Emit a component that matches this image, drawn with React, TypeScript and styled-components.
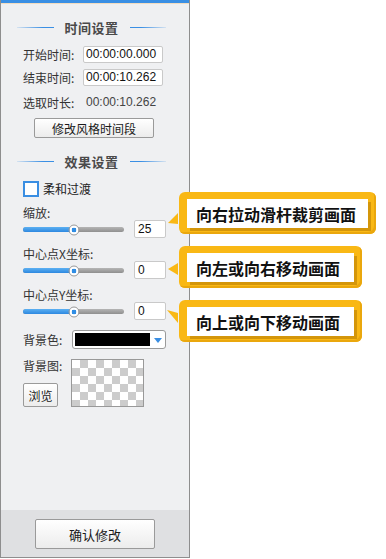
import styled, { createGlobalStyle } from "styled-components";

const GlobalStyle = createGlobalStyle`
  html, body {
    margin: 0;
    padding: 0;
    background: #ffffff;
  }
  * {
    box-sizing: border-box;
  }
`;

const FONT = `"Noto Sans CJK SC", "Liberation Sans", sans-serif`;
const NUM_FONT = `"Liberation Sans", "Noto Sans CJK SC", sans-serif`;

type CalloutData = {
  text: string;
  top: number;
  width: number;
  pointer: string;
};

const callouts: CalloutData[] = [
  { text: "向右拉动滑杆裁剪画面", top: 192, width: 197, pointer: "12,21 12,32 2,31" },
  { text: "向左或向右移动画面", top: 246, width: 183, pointer: "12,17 12,29 2,23" },
  { text: "向上或向下移动画面", top: 300, width: 183, pointer: "1,10 12,13 12,23" },
];

function Slider({ value }: { value: number }) {
  return (
    <StyledTrack>
      <StyledTrackFill $value={value} />
      <StyledThumb $value={value} />
    </StyledTrack>
  );
}

function App() {
  return (
    <StyledPage>
      <GlobalStyle />
      <StyledPanel>
        <StyledTopBar />
        <StyledContent>
          <StyledHeading>
            <StyledLine $side="left" />
            <StyledHeadingText>时间设置</StyledHeadingText>
            <StyledLine $side="right" />
          </StyledHeading>

          <StyledRow $mt={10}>
            <StyledLabel $width={60}>开始时间:</StyledLabel>
            <StyledTimeInput>00:00:00.000</StyledTimeInput>
          </StyledRow>
          <StyledRow $mt={6}>
            <StyledLabel $width={60}>结束时间:</StyledLabel>
            <StyledTimeInput>00:00:10.262</StyledTimeInput>
          </StyledRow>
          <StyledRow $mt={8}>
            <StyledLabel $width={63}>选取时长:</StyledLabel>
            <StyledValue>00:00:10.262</StyledValue>
          </StyledRow>

          <StyledWideButton>修改风格时间段</StyledWideButton>

          <StyledHeading $mt={16}>
            <StyledLine $side="left" />
            <StyledHeadingText>效果设置</StyledHeadingText>
            <StyledLine $side="right" />
          </StyledHeading>

          <StyledRow $mt={10}>
            <StyledCheckbox />
            <StyledCheckLabel>柔和过渡</StyledCheckLabel>
          </StyledRow>

          <StyledFieldLabel>缩放:</StyledFieldLabel>
          <StyledSliderRow>
            <Slider value={50} />
            <StyledSmallInput>25</StyledSmallInput>
          </StyledSliderRow>

          <StyledFieldLabel>中心点X坐标:</StyledFieldLabel>
          <StyledSliderRow>
            <Slider value={50} />
            <StyledSmallInput>0</StyledSmallInput>
          </StyledSliderRow>

          <StyledFieldLabel>中心点Y坐标:</StyledFieldLabel>
          <StyledSliderRow>
            <Slider value={50} />
            <StyledSmallInput>0</StyledSmallInput>
          </StyledSliderRow>

          <StyledRow $mt={10}>
            <StyledLabel $width={49}>背景色:</StyledLabel>
            <StyledColorSelect>
              <StyledColorSwatch />
              <StyledArrow />
            </StyledColorSelect>
          </StyledRow>

          <StyledImageRow>
            <StyledImageSide>
              <StyledImageLabel>背景图:</StyledImageLabel>
              <StyledSmallButton>浏览</StyledSmallButton>
            </StyledImageSide>
            <StyledChecker />
          </StyledImageRow>
        </StyledContent>
        <StyledFooter>
          <StyledConfirmButton>确认修改</StyledConfirmButton>
        </StyledFooter>
      </StyledPanel>

      {callouts.map((c) => (
        <StyledCallout key={c.text} $top={c.top} $width={c.width}>
          <StyledPointer width="14" height="42" viewBox="0 0 14 42">
            <polygon points={c.pointer} fill="#f9b815" />
          </StyledPointer>
          <StyledCalloutInner>{c.text}</StyledCalloutInner>
        </StyledCallout>
      ))}
    </StyledPage>
  );
}

export default App;

const StyledPage = styled.div`
  position: relative;
  width: 386px;
  height: 559px;
  background: #ffffff;
  font-family: ${FONT};
`;

const StyledPanel = styled.div`
  display: flex;
  flex-direction: column;
  width: 190px;
  height: 558px;
  background: #eff0f2;
  border-left: 1px solid #8e8e8e;
  border-right: 1px solid #8e8e8e;
  border-bottom: 1px solid #8e8e8e;
`;

const StyledTopBar = styled.div`
  height: 4px;
  background: #3a8fe4;
  border-bottom: 1px solid #f2dcc0;
`;

const StyledContent = styled.div`
  flex: 1;
  display: flex;
  flex-direction: column;
  padding: 16px 0 0 22px;
`;

const StyledHeading = styled.div<{ $mt?: number }>`
  display: flex;
  align-items: center;
  width: 149px;
  height: 16px;
  margin: ${({ $mt }) => $mt ?? 0}px 0 0 -6px;
  gap: 11px;
`;

const StyledLine = styled.div<{ $side: "left" | "right" }>`
  flex: 1;
  height: 1px;
  margin-top: -2px;
  background: linear-gradient(
    ${({ $side }) => ($side === "left" ? "to right" : "to left")},
    rgba(58, 143, 228, 0.15),
    #3a8fe4 70%
  );
`;

const StyledHeadingText = styled.span`
  font-size: 13px;
  font-weight: 700;
  color: #4a4a4a;
  line-height: 16px;
  letter-spacing: 0.5px;
`;

const StyledRow = styled.div<{ $mt?: number }>`
  display: flex;
  align-items: center;
  min-height: 17px;
  margin-top: ${({ $mt }) => $mt ?? 0}px;
`;

const StyledLabel = styled.span<{ $width: number }>`
  width: ${({ $width }) => $width}px;
  flex-shrink: 0;
  font-size: 12px;
  line-height: 14px;
  color: #333333;
`;

const StyledTimeInput = styled.div`
  width: 80px;
  height: 17px;
  padding-left: 2px;
  background: #ffffff;
  border: 1px solid #c9c9c9;
  border-radius: 2px;
  font-family: ${NUM_FONT};
  font-size: 12px;
  line-height: 15px;
  color: #111111;
`;

const StyledValue = styled.span`
  font-family: ${NUM_FONT};
  font-size: 12px;
  line-height: 15px;
  color: #444444;
`;

const StyledButtonBase = styled.div`
  display: flex;
  align-items: center;
  justify-content: center;
  background: linear-gradient(#ffffff, #ececec);
  border: 1px solid #9a9a9a;
  border-radius: 2px;
  font-size: 12px;
  color: #1a1a1a;
`;

const StyledWideButton = styled(StyledButtonBase)`
  width: 120px;
  height: 20px;
  margin: 7px 0 0 11px;
`;

const StyledCheckbox = styled.div`
  width: 16px;
  height: 16px;
  background: #ffffff;
  border: 2px solid #3a8ee2;
`;

const StyledCheckLabel = styled.span`
  margin-left: 4px;
  font-size: 12px;
  color: #222222;
`;

const StyledFieldLabel = styled.div`
  margin-top: 9px;
  font-size: 12px;
  line-height: 14px;
  color: #333333;
`;

const StyledSliderRow = styled.div`
  display: flex;
  align-items: center;
  gap: 10px;
  height: 18px;
`;

const StyledTrack = styled.div`
  position: relative;
  width: 101px;
  height: 5px;
  margin-top: 1px;
  border-radius: 3px;
  background: linear-gradient(#b5b5b5, #8f8f8f);
`;

const StyledTrackFill = styled.div<{ $value: number }>`
  width: ${({ $value }) => $value}%;
  height: 100%;
  border-radius: 3px 0 0 3px;
  background: linear-gradient(#5cb0f2, #2d88e0);
`;

const StyledThumb = styled.div<{ $value: number }>`
  position: absolute;
  top: 50%;
  left: ${({ $value }) => $value}%;
  width: 11px;
  height: 11px;
  transform: translate(-50%, -50%);
  border-radius: 50%;
  background: radial-gradient(circle, #2f8de4 0 2.2px, #ffffff 2.6px);
  border: 1px solid #9a9a9a;
`;

const StyledSmallInput = styled.div`
  width: 32px;
  height: 18px;
  padding-left: 3px;
  background: #ffffff;
  border: 1px solid #c9c9c9;
  border-radius: 2px;
  font-family: ${NUM_FONT};
  font-size: 12px;
  line-height: 16px;
  color: #111111;
`;

const StyledColorSelect = styled.div`
  display: flex;
  align-items: center;
  width: 94px;
  height: 19px;
  padding: 2px;
  background: #ffffff;
  border: 1px solid #9a9a9a;
  border-radius: 3px;
`;

const StyledColorSwatch = styled.div`
  width: 75px;
  height: 100%;
  background: #000000;
`;

const StyledArrow = styled.div`
  width: 0;
  height: 0;
  margin: 1px 0 0 4px;
  border-left: 4.5px solid transparent;
  border-right: 4.5px solid transparent;
  border-top: 5px solid #3a8ee2;
`;

const StyledImageRow = styled.div`
  display: flex;
  margin-top: 10px;
`;

const StyledImageSide = styled.div`
  display: flex;
  flex-direction: column;
  width: 48px;
`;

const StyledImageLabel = styled.span`
  font-size: 12px;
  line-height: 14px;
  color: #333333;
`;

const StyledSmallButton = styled(StyledButtonBase)`
  width: 35px;
  height: 24px;
  margin-top: 10px;
`;

const StyledChecker = styled.div`
  width: 73px;
  height: 48px;
  border: 1px solid #999999;
  background-color: #ffffff;
  background-image: repeating-conic-gradient(#cccccc 0 25%, #ffffff 0 50%);
  background-size: 16px 16px;
`;

const StyledFooter = styled.div`
  display: flex;
  align-items: center;
  justify-content: center;
  height: 47px;
  background: #dfe0e2;
`;

const StyledConfirmButton = styled(StyledButtonBase)`
  width: 120px;
  height: 30px;
  margin-top: 1px;
  font-size: 13px;
`;

const StyledCallout = styled.div<{ $top: number; $width: number }>`
  position: absolute;
  top: ${({ $top }) => $top}px;
  left: 179px;
  width: ${({ $width }) => $width}px;
  height: 42px;
  padding: 7px 8px 6px 8px;
  background: #f9b815;
  border-radius: 6px;
  box-shadow: inset -2px -2px 0 #eaa70d;
`;

const StyledPointer = styled.svg`
  position: absolute;
  top: 0;
  left: -13px;
`;

const StyledCalloutInner = styled.div`
  display: flex;
  align-items: center;
  height: 100%;
  padding-left: 9px;
  background: #ffffff;
  box-shadow: 3px 3px 0 #d4960a;
  font-size: 16px;
  font-weight: 700;
  color: #111111;
  white-space: nowrap;
`;
